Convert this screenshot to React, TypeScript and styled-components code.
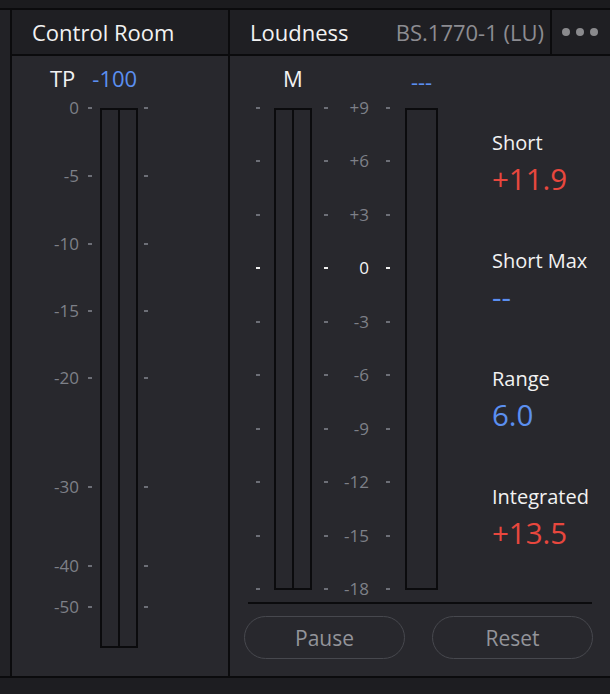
import React from "react";
import styled, { createGlobalStyle } from "styled-components";

const Global = createGlobalStyle`
  html, body { margin: 0; padding: 0; background: #1c1c1f; }
  body { font-family: "Open Sans", "Noto Sans", sans-serif; -webkit-font-smoothing: antialiased; }
`;

const LINE = "#0b0b0d";
const BODY = "#28282d";
const HEAD = "#1f1f23";
const BLUE = "#5b8ff0";
const RED = "#e8473e";

const Frame = styled.div`
  width: 610px;
  height: 694px;
  display: flex;
  flex-direction: column;
  background: #1d1d21;
  overflow: hidden;
`;

const TopStrip = styled.div`
  height: 8px;
  background: #1b1b1e;
  border-bottom: 2px solid ${LINE};
`;

const Main = styled.div`
  display: flex;
  height: 666px;
  border-bottom: 2px solid ${LINE};
`;

const SideStrip = styled.div`
  width: 10px;
  background: #222226;
  border-right: 2px solid ${LINE};
`;

const Panel = styled.section<{ $w: number; $last?: boolean }>`
  width: ${(p) => p.$w}px;
  display: flex;
  flex-direction: column;
  border-right: ${(p) => (p.$last ? "none" : `2px solid ${LINE}`)};
`;

const Header = styled.header`
  height: 44px;
  flex: none;
  background: ${HEAD};
  border-bottom: 2px solid ${LINE};
  display: flex;
  align-items: center;
  padding-left: 20px;
`;

const Title = styled.h2`
  margin: 0;
  font-size: 22px;
  line-height: 30px;
  font-weight: 400;
  color: #f2f2f2;
`;

const Standard = styled.span`
  margin-left: auto;
  padding-right: 6px;
  font-size: 22px;
  line-height: 30px;
  color: #8c8c91;
`;

const MenuArea = styled.div`
  align-self: stretch;
  box-sizing: border-box;
  width: 60px;
  border-left: 2px solid ${LINE};
  display: flex;
  align-items: center;
  gap: 6px;
  padding-left: 10px;
`;

const Dot = styled.span`
  width: 8px;
  height: 8px;
  border-radius: 50%;
  background: #8a8a8d;
`;

const Body = styled.div<{ $pl: number }>`
  flex: 1;
  background: ${BODY};
  padding-top: 7px;
  padding-left: ${(p) => p.$pl}px;
  display: flex;
  flex-direction: column;
`;

const ChannelHead = styled.div`
  height: 30px;
  display: flex;
  align-items: center;
  padding-left: 10px;
  gap: 17px;
`;

const HeadLabel = styled.span<{ $tone?: "white" | "blue"; $drop?: number }>`
  font-size: 22px;
  line-height: 30px;
  color: ${(p) => (p.$tone === "blue" ? BLUE : "#f2f2f2")};
  text-align: center;
  margin-top: ${(p) => p.$drop ?? 0}px;
`;

const GaugeRow = styled.div<{ $h: number }>`
  margin-top: 15px;
  display: flex;
  height: ${(p) => p.$h}px;
`;

const Meter = styled.div<{ $w: number; $h: number }>`
  width: ${(p) => p.$w}px;
  height: ${(p) => p.$h}px;
  box-sizing: border-box;
  border: 2px solid ${LINE};
  display: flex;
`;

const Channel = styled.div`
  flex: 1;
  & + & {
    border-left: 2px solid ${LINE};
  }
`;

const ScaleCol = styled.div<{ $w: number }>`
  position: relative;
  width: ${(p) => p.$w}px;
  height: 100%;
`;

const Tick = styled.div<{ $justify: "start" | "end" | "between"; $pl?: number; $pr?: number }>`
  position: absolute;
  left: 0;
  right: 0;
  height: 24px;
  margin-top: -12px;
  box-sizing: border-box;
  display: flex;
  align-items: center;
  justify-content: ${(p) =>
    p.$justify === "start" ? "flex-start" : p.$justify === "end" ? "flex-end" : "space-between"};
  padding: 0 ${(p) => p.$pr ?? 0}px 0 ${(p) => p.$pl ?? 0}px;
`;

const TickLabel = styled.span<{ $hot?: boolean; $mr: number }>`
  font-size: 17px;
  line-height: 24px;
  color: ${(p) => (p.$hot ? "#f5f5f5" : "#7e8088")};
  margin-left: auto;
  margin-right: ${(p) => p.$mr}px;
`;

const Dash = styled.span<{ $hot?: boolean }>`
  flex: none;
  width: 4px;
  height: 2px;
  background: ${(p) => (p.$hot ? "#f0f0f0" : "#6d6f77")};
`;

/* Loudness */
const LoudTop = styled.div`
  display: flex;
  align-items: flex-start;
`;

const LoudGauge = styled.div`
  display: grid;
  grid-template-columns: 24px 38px 93px 33px;
  grid-template-rows: 30px 482px;
  row-gap: 15px;
`;

const Centered = styled.div`
  display: flex;
  justify-content: center;
`;

const Stats = styled.div`
  margin-left: 54px;
  padding-top: 66px;
  display: flex;
  flex-direction: column;
  gap: 50px;
`;

const Stat = styled.div`
  display: flex;
  flex-direction: column;
  gap: 4px;
`;

const StatLabel = styled.span`
  font-size: 20px;
  line-height: 28px;
  color: #f2f2f2;
`;

const StatValue = styled.span<{ $tone: "red" | "blue" }>`
  font-size: 29.5px;
  line-height: 36px;
  color: ${(p) => (p.$tone === "red" ? RED : BLUE)};
`;

const Rule = styled.div`
  margin: 12px 18px 0 -2px;
  height: 2px;
  background: ${LINE};
`;

const Buttons = styled.div`
  margin: 12px 0 0 -6px;
  display: flex;
  gap: 27px;
`;

const Pill = styled.button`
  width: 161px;
  height: 43px;
  box-sizing: border-box;
  border: 1.5px solid #47484e;
  border-radius: 22px;
  background: transparent;
  color: #93949a;
  font-family: "Open Sans", "Noto Sans", sans-serif;
  font-size: 21px;
  padding: 0;
  cursor: pointer;
`;

const tpTicks: { label: string; y: number }[] = [
  { label: "0", y: 0 },
  { label: "-5", y: 68 },
  { label: "-10", y: 136 },
  { label: "-15", y: 202.5 },
  { label: "-20", y: 270 },
  { label: "-30", y: 378.5 },
  { label: "-40", y: 458 },
  { label: "-50", y: 498.5 },
];

const luLabels = ["+9", "+6", "+3", "0", "-3", "-6", "-9", "-12", "-15", "-18"];
const LU_STEP = 481 / 9;

const stats: { label: string; value: string; tone: "red" | "blue" }[] = [
  { label: "Short", value: "+11.9", tone: "red" },
  { label: "Short Max", value: "--", tone: "blue" },
  { label: "Range", value: "6.0", tone: "blue" },
  { label: "Integrated", value: "+13.5", tone: "red" },
];

export default function App() {
  return (
    <>
      <Global />
      <Frame>
        <TopStrip />
        <Main>
          <SideStrip />
          <Panel $w={216}>
            <Header>
              <Title>Control Room</Title>
            </Header>
            <Body $pl={28}>
              <ChannelHead>
                <HeadLabel>TP</HeadLabel>
                <HeadLabel $tone="blue">-100</HeadLabel>
              </ChannelHead>
              <GaugeRow $h={540}>
                <ScaleCol $w={60}>
                  {tpTicks.map((t) => (
                    <Tick key={t.label} $justify="end" $pr={8} style={{ top: t.y }}>
                      <TickLabel $mr={9}>{t.label}</TickLabel>
                      <Dash />
                    </Tick>
                  ))}
                </ScaleCol>
                <Meter $w={38} $h={540}>
                  <Channel />
                  <Channel />
                </Meter>
                <ScaleCol $w={22}>
                  {tpTicks.map((t) => (
                    <Tick key={t.label} $justify="start" $pl={6} style={{ top: t.y }}>
                      <Dash />
                    </Tick>
                  ))}
                </ScaleCol>
              </GaugeRow>
            </Body>
          </Panel>
          <Panel $w={380} $last>
            <Header>
              <Title>Loudness</Title>
              <Standard>BS.1770-1 (LU)</Standard>
              <MenuArea>
                <Dot />
                <Dot />
                <Dot />
              </MenuArea>
            </Header>
            <Body $pl={20}>
              <LoudTop>
                <LoudGauge>
                  <div />
                  <Centered>
                    <HeadLabel>M</HeadLabel>
                  </Centered>
                  <div />
                  <Centered>
                    <HeadLabel $tone="blue" $drop={3}>---</HeadLabel>
                  </Centered>
                  <ScaleCol $w={24}>
                    {luLabels.map((l, i) => (
                      <Tick key={l} $justify="start" $pl={6} style={{ top: i * LU_STEP }}>
                        <Dash $hot={l === "0"} />
                      </Tick>
                    ))}
                  </ScaleCol>
                  <Meter $w={38} $h={482}>
                    <Channel />
                    <Channel />
                  </Meter>
                  <ScaleCol $w={93}>
                    {luLabels.map((l, i) => (
                      <Tick key={l} $justify="between" $pl={12} $pr={15} style={{ top: i * LU_STEP }}>
                        <Dash $hot={l === "0"} />
                        <TickLabel $hot={l === "0"} $mr={17}>
                          {l}
                        </TickLabel>
                        <Dash $hot={l === "0"} />
                      </Tick>
                    ))}
                  </ScaleCol>
                  <Meter $w={33} $h={482}>
                    <Channel />
                  </Meter>
                </LoudGauge>
                <Stats>
                  {stats.map((s) => (
                    <Stat key={s.label}>
                      <StatLabel>{s.label}</StatLabel>
                      <StatValue $tone={s.tone}>{s.value}</StatValue>
                    </Stat>
                  ))}
                </Stats>
              </LoudTop>
              <Rule />
              <Buttons>
                <Pill>Pause</Pill>
                <Pill>Reset</Pill>
              </Buttons>
            </Body>
          </Panel>
        </Main>
      </Frame>
    </>
  );
}
